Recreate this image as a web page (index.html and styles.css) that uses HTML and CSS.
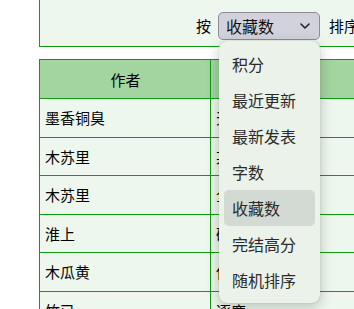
FILE: index.html
```html
<!DOCTYPE html>
<html lang="zh-CN">
<head>
  <meta charset="UTF-8">
  <title>排行榜</title>
  <link rel="stylesheet" href="styles.css">
</head>
<body>
  <div class="page">
    <div class="filter">
      <span class="label by">按</span>
      <div class="sort">
        <div class="sort-box">
          <span>收藏数</span>
          <svg class="chevron" width="10" height="6" viewBox="0 0 10 6">
            <path d="M1 1 L5 5 L9 1" fill="none" stroke="#222" stroke-width="1.6" stroke-linecap="round" stroke-linejoin="round"/>
          </svg>
        </div>
        <ul class="menu">
          <li>积分</li>
          <li>最近更新</li>
          <li>最新发表</li>
          <li>字数</li>
          <li class="active">收藏数</li>
          <li>完结高分</li>
          <li>随机排序</li>
        </ul>
      </div>
      <span class="label">排序</span>
    </div>

    <table class="list">
      <tr>
        <th class="author">作者</th>
        <th>作品</th>
      </tr>
      <tr><td>墨香铜臭</td><td>天官赐福</td></tr>
      <tr><td>木苏里</td><td>某某</td></tr>
      <tr><td>木苏里</td><td>全球高考</td></tr>
      <tr><td>淮上</td><td>破云</td></tr>
      <tr><td>木瓜黄</td><td>伪装学渣</td></tr>
      <tr><td>竹已</td><td>逐鹿</td></tr>
    </table>
  </div>
</body>
</html>
```

FILE: styles.css
```css
html, body {
  margin: 0;
  overflow: hidden;
  background: #fff;
}
body {
  font-family: "Noto Sans CJK SC", "Noto Sans", sans-serif;
  color: #000;
}
.page {
  padding-left: 39px;
}
.filter {
  width: 520px;
  height: 47px;
  box-sizing: border-box;
  border: 1px solid #109a10;
  border-top: none;
  background: #edf7ed;
  display: flex;
  align-items: flex-start;
  padding: 12px 0 0 156px;
}
.label {
  font-size: 15px;
  line-height: 28px;
}
.label.by {
  margin-right: 7px;
}
.sort {
  position: relative;
  margin-right: 9px;
}
.sort-box {
  width: 102px;
  height: 28px;
  box-sizing: border-box;
  border: 1px solid #8c8c98;
  border-radius: 5px;
  background: #d2d2dc;
  display: flex;
  align-items: center;
  justify-content: space-between;
  padding: 0 9px 0 7px;
  font-size: 16px;
  color: #111;
}
.chevron {
  display: block;
}
.menu {
  position: absolute;
  left: 1px;
  top: 29px;
  width: 101px;
  height: 262px;
  box-sizing: border-box;
  margin: 0;
  padding: 5px 5px;
  list-style: none;
  background: #eaf2ea;
  border-radius: 8px;
  box-shadow: 0 4px 14px rgba(0, 0, 0, 0.22), 0 0 1px rgba(0, 0, 0, 0.3);
  z-index: 2;
}
.menu li {
  height: 36px;
  line-height: 36px;
  padding-left: 8px;
  border-radius: 5px;
  font-size: 16px;
  color: #2a2a2a;
}
.menu li.active {
  background: #d3d9d3;
}
.list {
  margin-top: 12px;
  width: 520px;
  border-collapse: separate;
  border-spacing: 0;
  border-top: 1px solid #109a10;
  border-left: 1px solid #109a10;
  font-size: 15px;
}
.list th,
.list td {
  border-right: 1px solid #109a10;
  border-bottom: 1px solid #109a10;
  padding: 0 4px 0 5px;
  height: 37.5px;
  text-align: left;
  background: #edf7ed;
  font-weight: normal;
}
.list th {
  height: 38px;
  background: #a3d5a0;
  text-align: center;
}
.list .author,
.list td:first-child {
  width: 161px;
}
```
